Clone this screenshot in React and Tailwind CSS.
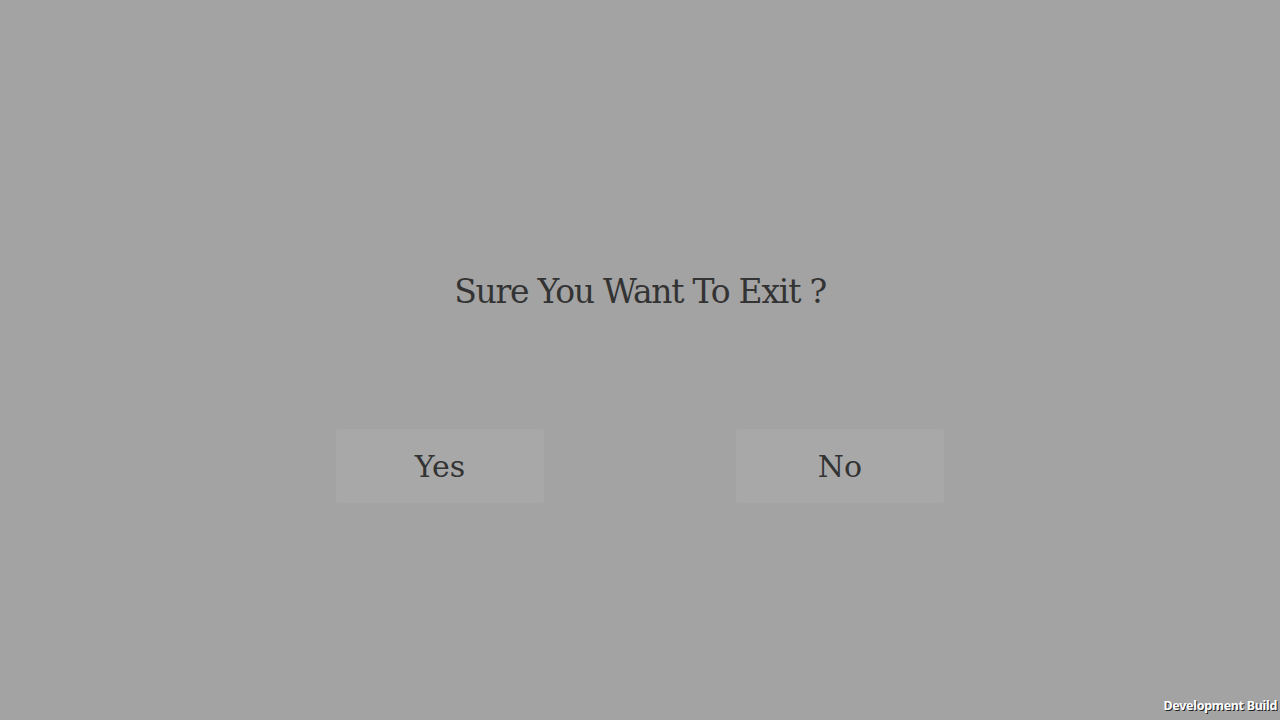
export default function App() {
  return (
    <div className="relative w-full h-[720px] bg-[#a3a3a3] overflow-hidden flex flex-col items-center">
      <h1 className="mt-[269px] h-[46px] leading-[46px] text-[33px] text-[#333333] font-['DejaVu_Serif',serif] tracking-[-1.25px]">
        Sure You Want To Exit ?
      </h1>
      <div className="mt-[114px] flex gap-[192px]">
        <button className="w-[208px] h-[74px] rounded-[4px] bg-[#a8a8a8] text-[30px] text-[#333333] font-['DejaVu_Serif',serif]">
          Yes
        </button>
        <button className="w-[208px] h-[74px] rounded-[4px] bg-[#a8a8a8] text-[30px] text-[#333333] font-['DejaVu_Serif',serif]">
          No
        </button>
      </div>
      <div className="absolute right-[3px] bottom-[8px] text-[12.5px] leading-none font-bold text-white font-['Noto_Sans',sans-serif] tracking-[-0.3px] [text-shadow:1px_1px_0_#222]">
        Development Build
      </div>
    </div>
  );
}
